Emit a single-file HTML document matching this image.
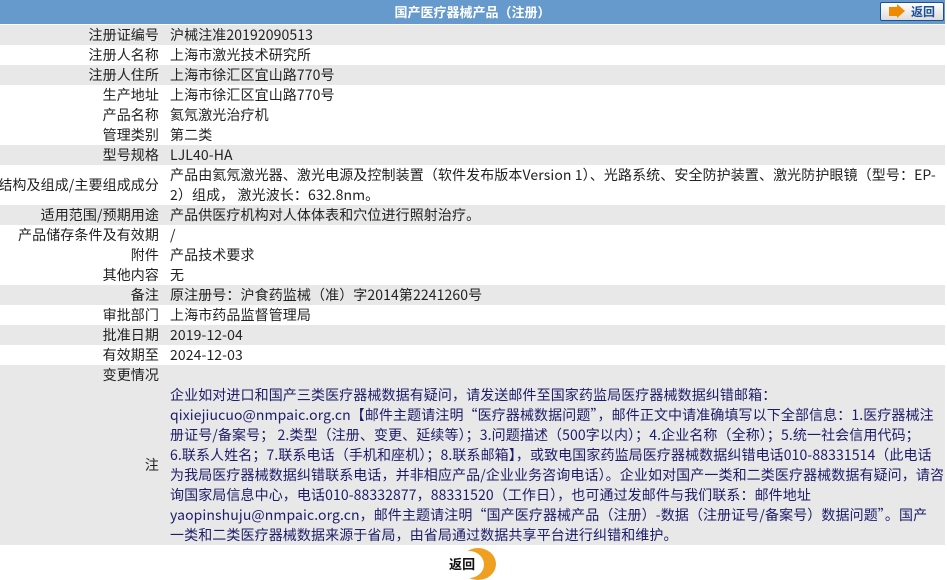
<!DOCTYPE html>
<html><head><meta charset="utf-8"><style>
*{margin:0;padding:0;box-sizing:border-box}
body{width:947px;height:580px;background:#fff;font-family:"Noto Sans CJK SC","Liberation Sans",sans-serif;font-size:14px;letter-spacing:0.1px;color:#222;position:relative;overflow:hidden}
.hd{position:absolute;left:0;top:0;width:945px;height:24px;background:#6699cc;color:#fff;font-weight:bold;text-align:center;line-height:24px;font-size:13px;letter-spacing:0}
.btn{position:absolute;left:880px;top:2px;width:64px;height:19px;border:1px solid #1f4f8f;border-radius:2px;background:linear-gradient(#fff,#ddd);color:#1a4f99;font-weight:bold;font-size:12px;line-height:17px;padding-left:30px;letter-spacing:0}
.btn i{position:absolute;left:8px;top:4px;width:8px;height:9px;background:#f08a00}
.btn b{position:absolute;left:16px;top:1px;border-left:8px solid #f08a00;border-top:7px solid transparent;border-bottom:7px solid transparent}
.r{position:absolute;left:0;width:945px;height:20px;line-height:20px}
.g{background:#e8e8e8}
.l{position:absolute;right:786px;top:0;white-space:nowrap;text-align:right}
.v{position:absolute;left:170px;top:0;width:772px;white-space:nowrap}
.note{color:#1c1c6a}
</style></head><body>
<div class="hd">国产医疗器械产品（注册）</div>
<div class="btn"><i></i><b></b>返回</div>
<div class="r g" style="top:25px"><span class="l">注册证编号</span><span class="v">沪械注准20192090513</span></div>
<div class="r" style="top:45px"><span class="l">注册人名称</span><span class="v">上海市激光技术研究所</span></div>
<div class="r g" style="top:65px"><span class="l">注册人住所</span><span class="v">上海市徐汇区宜山路770号</span></div>
<div class="r" style="top:85px"><span class="l">生产地址</span><span class="v">上海市徐汇区宜山路770号</span></div>
<div class="r" style="top:105px"><span class="l">产品名称</span><span class="v">氦氖激光治疗机</span></div>
<div class="r" style="top:125px"><span class="l">管理类别</span><span class="v">第二类</span></div>
<div class="r g" style="top:145px"><span class="l">型号规格</span><span class="v">LJL40-HA</span></div>
<div class="r" style="top:165px;height:40px"><span class="l" style="top:10px">结构及组成/主要组成成分</span><span class="v">产品由氦氖激光器、激光电源及控制装置（软件发布版本Version 1）、光路系统、安全防护装置、激光防护眼镜（型号：EP-<br>2）组成， 激光波长：632.8nm。</span></div>
<div class="r g" style="top:205px"><span class="l">适用范围/预期用途</span><span class="v">产品供医疗机构对人体体表和穴位进行照射治疗。</span></div>
<div class="r" style="top:225px"><span class="l">产品储存条件及有效期</span><span class="v">/</span></div>
<div class="r" style="top:245px"><span class="l">附件</span><span class="v">产品技术要求</span></div>
<div class="r" style="top:265px"><span class="l">其他内容</span><span class="v">无</span></div>
<div class="r g" style="top:285px"><span class="l">备注</span><span class="v">原注册号：沪食药监械（准）字2014第2241260号</span></div>
<div class="r" style="top:305px"><span class="l">审批部门</span><span class="v">上海市药品监督管理局</span></div>
<div class="r g" style="top:325px"><span class="l">批准日期</span><span class="v">2019-12-04</span></div>
<div class="r" style="top:345px"><span class="l">有效期至</span><span class="v">2024-12-03</span></div>
<div class="r g" style="top:365px;height:20px"><span class="l">变更情况</span></div>
<div class="r g" style="top:385px;height:160px"><span class="l" style="top:70px">注</span><span class="v note">企业如对进口和国产三类医疗器械数据有疑问，请发送邮件至国家药监局医疗器械数据纠错邮箱：<br>qixiejiucuo@nmpaic.org.cn【邮件主题请注明“医疗器械数据问题”，邮件正文中请准确填写以下全部信息：1.医疗器械注<br>册证号/备案号； 2.类型（注册、变更、延续等）；3.问题描述（500字以内）；4.企业名称（全称）；5.统一社会信用代码；<br>6.联系人姓名；7.联系电话（手机和座机）；8.联系邮箱】，或致电国家药监局医疗器械数据纠错电话010-88331514（此电话<br>为我局医疗器械数据纠错联系电话，并非相应产品/企业业务咨询电话）。企业如对国产一类和二类医疗器械数据有疑问，请咨<br>询国家局信息中心，电话010-88332877，88331520（工作日），也可通过发邮件与我们联系：邮件地址<br>yaopinshuju@nmpaic.org.cn，邮件主题请注明“国产医疗器械产品（注册）-数据（注册证号/备案号）数据问题”。国产<br>一类和二类医疗器械数据来源于省局，由省局通过数据共享平台进行纠错和维护。</span></div>
<div style="position:absolute;left:460px;top:548px;width:36px;height:32px;border-radius:50%;background:#f0a020"></div>
<div style="position:absolute;left:454px;top:551px;width:30px;height:27px;border-radius:50%;background:#fff"></div>
<div style="position:absolute;left:449px;top:554px;font-weight:bold;font-size:13px;color:#111">返回</div>
</body></html>
